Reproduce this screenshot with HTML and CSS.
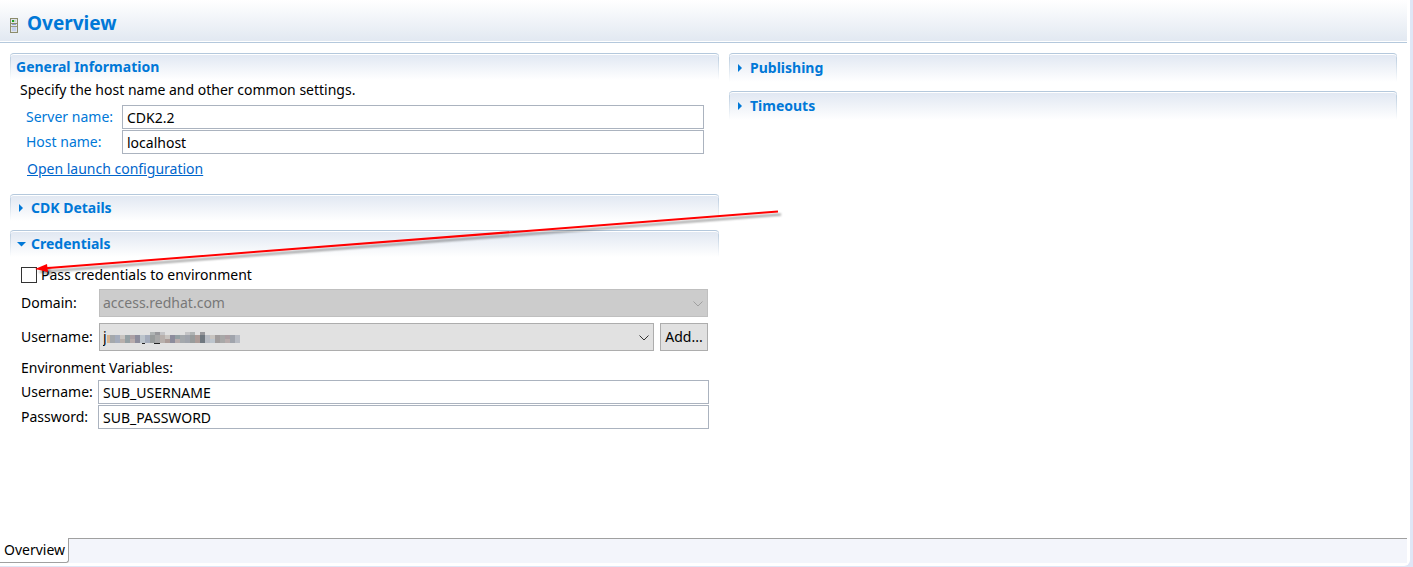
FILE: index.html
```html
<!DOCTYPE html>
<html lang="en">
<head>
    <meta charset="UTF-8">
    <meta name="viewport" content="width=device-width, initial-scale=1.0">
    <title>Overview</title>
    <link rel="stylesheet" href="styles.css">
</head>
<body>
    <div class="editor">
        <header class="form-header">
            <svg class="server-icon" width="8" height="15" viewBox="0 0 8 15" shape-rendering="crispEdges">
                <rect width="8" height="15" fill="#8c8c6c"/>
                <rect x="1" y="1" width="6" height="13" fill="#dfe4ea"/>
                <rect x="2" y="2" width="2" height="2" fill="#1ea01e"/>
                <rect x="4" y="2" width="2" height="2" fill="#c4d4c0"/>
                <rect x="1" y="5" width="6" height="1" fill="#8c8c6c"/>
                <rect x="2" y="6" width="4" height="1" fill="#8ea2cc"/>
                <rect x="1" y="8" width="6" height="1" fill="#9c9c80"/>
                <rect x="2" y="9" width="4" height="4" fill="#c4d0ec"/>
            </svg>
            <h1>Overview</h1>
        </header>

        <main class="columns">
            <div class="column">
                <section class="section general">
                    <h2 class="section-title plain">General Information</h2>
                    <p class="description">Specify the host name and other common settings.</p>
                    <div class="general-form">
                        <label for="serverName">Server name:</label>
                        <input type="text" id="serverName" value="CDK2.2">
                        <label for="hostName">Host name:</label>
                        <input type="text" id="hostName" value="localhost">
                    </div>
                    <a class="launch-link" href="#launch">Open launch configuration</a>
                </section>

                <section class="section details">
                    <h2 class="section-title">
                        <svg class="twistie" width="10" height="10" viewBox="0 0 10 10"><path d="M3 1v8l4-4z" fill="#0078d7"/></svg>
                        CDK Details
                    </h2>
                </section>

                <section class="section credentials">
                    <h2 class="section-title">
                        <svg class="twistie" width="10" height="10" viewBox="0 0 10 10"><path d="M1 3h9L5.500 7.500z" fill="#0078d7"/></svg>
                        Credentials
                    </h2>
                    <div class="check-row">
                        <input type="checkbox" id="passCredentials">
                        <label for="passCredentials">Pass credentials to environment</label>
                        <svg class="arrow" width="750" height="74" viewBox="0 0 750 74">
                            <defs>
                                <filter id="shadow" x="-5%" y="-20%" width="110%" height="150%">
                                    <feDropShadow dx="3" dy="3" stdDeviation="1" flood-color="#000" flood-opacity="0.4"/>
                                </filter>
                            </defs>
                            <g filter="url(#shadow)" fill="#f00">
                                <path d="M10 60.3 743 3.4" stroke="#f00" stroke-width="2"/>
                                <path d="M0 61 12 56l1 8z"/>
                            </g>
                        </svg>
                    </div>
                    <div class="credentials-form">
                        <label for="domain">Domain:</label>
                        <div class="combo disabled">
                            <select id="domain" disabled>
                                <option>access.redhat.com</option>
                            </select>
                            <svg class="chevron" width="10" height="6" viewBox="0 0 10 6"><path d="M0.500 0.500 5 5l4.500-4.500" fill="none" stroke="currentColor"/></svg>
                        </div>
                        <label for="username">Username:</label>
                        <div class="combo-row">
                            <div class="combo">
                                <select id="username">
                                    <option>j</option>
                                </select>
                                <svg class="mosaic" width="133" height="13" viewBox="0 0 133 13" shape-rendering="crispEdges">
                                    <path d="M35 12h3v-1h2v-1h-2v1h-3zM47 11h6v1h-6z" fill="#222"/>
                                    <path d="M43 0h5v3h-5zM83 0h5v3h-5z" fill="#b0b4b4"/>
                                    <path d="M48 0h5v3h-5zM93 0h5v3h-5z" fill="#98989c"/>
                                    <path d="M53 0h5v3h-5zM78 0h5v3h-5z" fill="#c4c4c6"/>
                                    <path d="M0 3h3v8h-3z" fill="#d8b490"/>
                                    <path d="M3 3h5v8h-5zM73 3h5v8h-5z" fill="#a4a8ac"/>
                                    <path d="M8 3h5v8h-5zM38 3h5v8h-5z" fill="#a4acbc"/>
                                    <path d="M13 3h5v8h-5zM53 3h5v8h-5z" fill="#b8b0ac"/>
                                    <path d="M18 3h5v8h-5zM68 3h5v8h-5z" fill="#94a0a4"/>
                                    <path d="M23 3h5v8h-5zM118 3h5v8h-5z" fill="#aca0a4"/>
                                    <path d="M28 3h5v8h-5zM63 3h5v8h-5z" fill="#8c8c9c"/>
                                    <path d="M33 3h5v8h-5zM103 3h5v8h-5z" fill="#bcc4cc"/>
                                    <path d="M43 3h5v8h-5zM83 3h5v8h-5z" fill="#989c9c"/>
                                    <path d="M48 3h5v8h-5zM113 3h5v8h-5z" fill="#a8a8a8"/>
                                    <path d="M58 3h5v8h-5zM88 3h5v8h-5z" fill="#ac9c98"/>
                                    <path d="M78 3h5v8h-5zM123 3h5v8h-5z" fill="#a0a4ac"/>
                                    <path d="M93 3h5v8h-5z" fill="#707880"/>
                                    <path d="M98 3h5v8h-5zM128 3h5v8h-5z" fill="#b8bcc4"/>
                                    <path d="M108 3h5v8h-5z" fill="#a09c9c"/>
                                    <path d="M13 3h5v4h-5zM58 3h5v4h-5zM103 3h5v4h-5z" fill="#c8c4c0"/>
                                    <path d="M23 7h5v4h-5zM68 7h5v4h-5zM118 7h5v4h-5z" fill="#b8acac"/>
                                </svg>
                                <svg class="chevron" width="10" height="6" viewBox="0 0 10 6"><path d="M0.500 0.500 5 5l4.500-4.500" fill="none" stroke="currentColor"/></svg>
                            </div>
                            <button type="button" class="add-btn">Add...</button>
                        </div>
                    </div>
                    <p class="env-title">Environment Variables:</p>
                    <div class="env-form">
                        <label for="envUsername">Username:</label>
                        <input type="text" id="envUsername" value="SUB_USERNAME">
                        <label for="envPassword">Password:</label>
                        <input type="text" id="envPassword" value="SUB_PASSWORD">
                    </div>
                </section>
            </div>

            <div class="column right">
                <section class="section">
                    <h2 class="section-title">
                        <svg class="twistie" width="10" height="10" viewBox="0 0 10 10"><path d="M3 1v8l4-4z" fill="#0078d7"/></svg>
                        Publishing
                    </h2>
                </section>
                <section class="section">
                    <h2 class="section-title">
                        <svg class="twistie" width="10" height="10" viewBox="0 0 10 10"><path d="M3 1v8l4-4z" fill="#0078d7"/></svg>
                        Timeouts
                    </h2>
                </section>
            </div>
        </main>

        <nav class="page-tabs">
            <a class="tab" href="#overview">Overview</a>
            <div class="tab-filler"></div>
        </nav>
    </div>
</body>
</html>
```

FILE: styles.css
```css
* {
    box-sizing: border-box;
}
body {
    margin: 0;
    background-color: #dfe6f6;
    font-family: "Noto Sans", "Open Sans", sans-serif;
    font-size: 14px;
    line-height: 20px;
    color: #000;
}
h1, h2, p {
    margin: 0;
}
label {
    white-space: nowrap;
}
.editor {
    display: flex;
    flex-direction: column;
    min-height: calc(100vh - 1px);
    margin-right: 3px;
    padding: 0 3px 3px 0;
    background-color: #fff;
    border-bottom-right-radius: 6px;
}
.form-header {
    display: flex;
    align-items: center;
    gap: 9px;
    height: 43px;
    padding: 4px 10px 0;
    background: linear-gradient(#fff, #e1e8f1);
    border-bottom: 1px solid #b4c8dc;
    box-shadow: inset 0 -1px #fff;
}
.server-icon {
    margin-top: 4px;
}
h1 {
    font-size: 19px;
    line-height: 26px;
    color: #0078d7;
}
.columns {
    flex: 1;
    display: grid;
    grid-template-columns: 709fr 668fr;
    gap: 10px;
    padding: 10px 10px 0;
}
.section-title {
    display: flex;
    align-items: center;
    gap: 5px;
    height: 27px;
    padding: 0 6px;
    border-top: 1px solid #b4c8dc;
    border-radius: 4px 4px 0 0;
    background:
        linear-gradient(#b4c8dc, #fff) left / 1px 100% no-repeat,
        linear-gradient(#b4c8dc, #fff) right / 1px 100% no-repeat,
        linear-gradient(#e0e7f2, #fff);
    box-shadow: inset 0 1px #fff;
    font-size: 14px;
    line-height: 20px;
    color: #0078d7;
}
.description {
    padding-left: 10px;
}
.general-form {
    display: grid;
    grid-template-columns: 85px 1fr;
    gap: 1px 11px;
    align-items: center;
    margin: 5px 15px 0 16px;
    color: #0078d7;
}
input[type="text"] {
    width: 100%;
    height: 24px;
    padding: 0 4px;
    border: 1px solid #abb3bf;
    background-color: #fff;
    font: inherit;
    color: #000;
}
.launch-link {
    display: inline-block;
    margin: 5px 0 0 17px;
    color: #0066cc;
}
.details {
    margin-top: 15px;
}
.credentials {
    margin-top: 9px;
}
.check-row {
    position: relative;
    display: flex;
    align-items: center;
    gap: 4px;
    margin: 8px 0 0 11px;
}
.check-row input {
    appearance: none;
    width: 16px;
    height: 16px;
    margin: 0;
    border: 1px solid #333;
    background-color: #fff;
}
.arrow {
    position: absolute;
    left: 14px;
    top: -57px;
    pointer-events: none;
}
.credentials-form {
    display: grid;
    grid-template-columns: 72px 1fr;
    gap: 6px;
    align-items: center;
    margin: 4px 11px 0 11px;
}
.combo {
    position: relative;
    flex: 1;
    color: #333;
}
.combo select {
    display: block;
    appearance: none;
    width: 100%;
    height: 28px;
    padding: 0 3px;
    border: 1px solid #adadad;
    border-radius: 0;
    background-color: #e1e1e1;
    font: inherit;
    color: #000;
}
.combo.disabled {
    color: #a0a0a0;
}
.combo.disabled select {
    border-color: #bfbfbf;
    background-color: #ccc;
    color: #787878;
    opacity: 1;
}
.chevron {
    position: absolute;
    right: 5px;
    top: 12px;
    pointer-events: none;
}
.mosaic {
    position: absolute;
    left: 8px;
    top: 9px;
    pointer-events: none;
}
.combo-row {
    display: flex;
    gap: 6px;
}
.add-btn {
    width: 48px;
    height: 28px;
    padding: 0;
    border: 1px solid #adadad;
    background-color: #e1e1e1;
    font: inherit;
    color: #000;
}
.env-title {
    margin: 7px 0 0 11px;
}
.env-form {
    display: grid;
    grid-template-columns: 72px 1fr;
    gap: 1px 5px;
    align-items: center;
    margin: 2px 10px 0 11px;
}
.right .section-title {
    height: 29px;
}
.right .section {
    margin-bottom: 9px;
}
.page-tabs {
    display: flex;
    height: 25px;
}
.tab {
    padding: 2px 3px 0 4px;
    border: 1px solid #a0a0a0;
    border-width: 0 1px 1px 0;
    border-bottom-right-radius: 3px;
    color: #000;
    text-decoration: none;
}
.tab-filler {
    flex: 1;
    border-top: 1px solid #a0a0a0;
    background-color: #f3f5fb;
}
```
